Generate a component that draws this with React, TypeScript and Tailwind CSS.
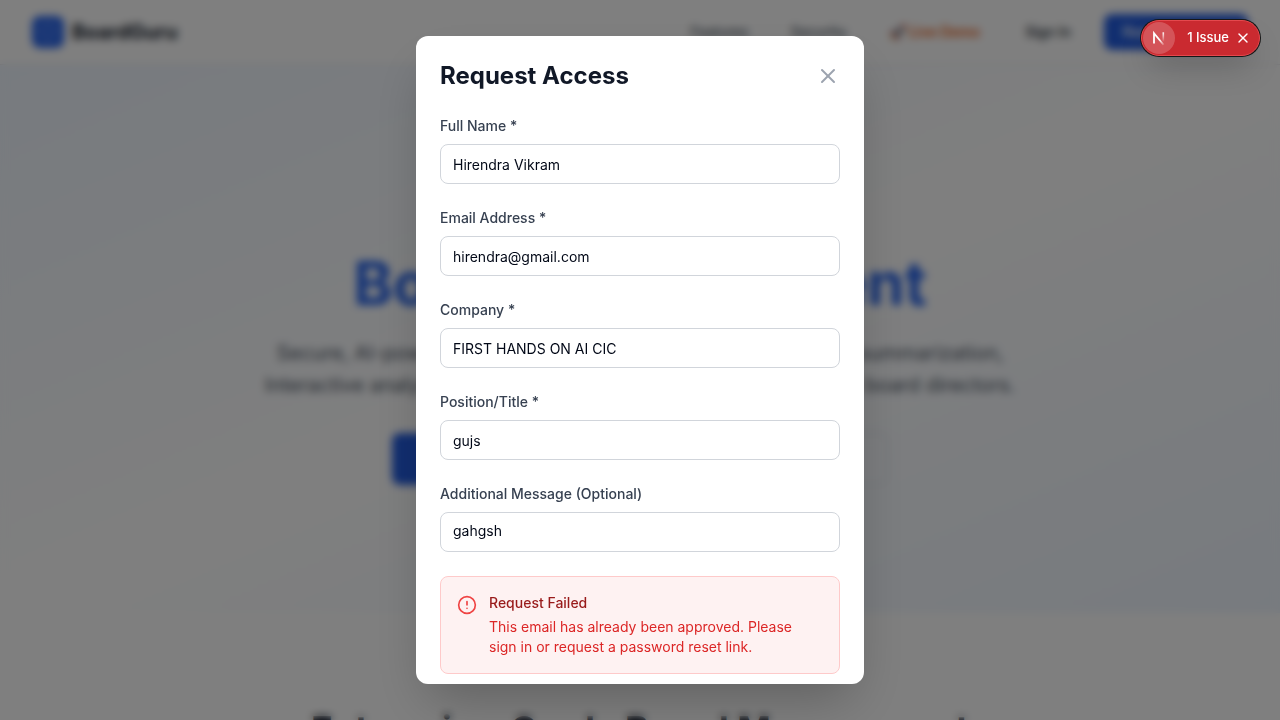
import React from "react";
import { AlertCircle, Shield, X } from "lucide-react";

const fields = [
  { id: "fullName", label: "Full Name *", type: "text", value: "Hirendra Vikram" },
  { id: "email", label: "Email Address *", type: "email", value: "hirendra@gmail.com" },
  { id: "company", label: "Company *", type: "text", value: "FIRST HANDS ON AI CIC" },
  { id: "position", label: "Position/Title *", type: "text", value: "gujs" },
];

const labelClass = "block text-sm font-medium text-[#374151]";
const controlClass =
  "block h-10 w-full rounded-lg border border-[#d1d5db] bg-white px-3 py-2 text-sm text-[#020817] outline-none";

function NavBar() {
  return (
    <header className="border-b border-gray-200 bg-white">
      <nav className="flex h-16 items-center justify-between px-8">
        <a href="#home" className="flex items-center gap-2">
          <span className="flex size-8 items-center justify-center rounded-lg bg-[#2563eb] text-white">
            <Shield className="size-5 opacity-50" />
          </span>
          <span className="text-xl font-bold text-gray-900">BoardGuru</span>
        </a>
        <div className="flex items-center gap-4 text-sm font-medium text-[#4b5563]">
          <div className="flex items-center gap-[42px] pr-3">
            <a href="#features">Features</a>
            <a href="#security">Security</a>
            <a href="#demo" className="font-semibold text-[#ea580c]">🚀 Live Demo</a>
          </div>
          <button type="button" className="h-9 w-20 text-gray-900">Sign In</button>
          <button type="button" className="h-9 w-36 rounded-lg bg-[#225ce0] text-white">
            Request Access
          </button>
        </div>
      </nav>
    </header>
  );
}

function Landing() {
  return (
    <main>
      <section className="flex flex-col items-center bg-linear-to-br from-[#eff6ff] via-white to-[#eff6ff] px-8 py-32 text-center">
        <h1 className="mb-6 text-6xl leading-none font-bold text-gray-900">
          The Future of
          <span className="block text-[#2563eb]">Board Management</span>
        </h1>
        <p className="mb-8 max-w-3xl text-xl leading-8 text-[#4b5563]">
          Secure, AI-powered board platform with intelligent document summarization,
          <br />
          Interactive analytics, and enterprise-grade security for modern board directors.
        </p>
        <div className="flex gap-4">
          <button type="button" className="h-[52px] w-60 rounded-lg bg-[#225ce0] font-medium text-white">
            Request Access
          </button>
          <button type="button" className="h-[52px] w-60 rounded-lg border border-gray-300 font-medium text-gray-900">
            Watch Demo
          </button>
        </div>
      </section>
      <section className="bg-white px-8 py-24 text-center">
        <h2 className="text-4xl font-bold text-gray-900">Enterprise-Grade Board Management</h2>
      </section>
    </main>
  );
}

function RequestAccessDialog() {
  return (
    <div className="fixed inset-0 z-10 flex items-center justify-center bg-black/50 p-4 backdrop-blur-xs">
      <div
        role="dialog"
        aria-modal="true"
        aria-labelledby="dialog-title"
        className="max-h-[90vh] w-full max-w-md overflow-hidden rounded-xl bg-white shadow-2xl"
      >
        <div className="flex items-center justify-between p-6">
          <h2 id="dialog-title" className="text-2xl font-bold text-[#111827]">Request Access</h2>
          <button type="button" aria-label="Close" className="text-[#9ca3af]">
            <X className="size-6" />
          </button>
        </div>
        <form className="flex flex-col gap-6 px-6 pb-6">
          {fields.map((f) => (
            <div key={f.id} className="flex flex-col gap-2">
              <label htmlFor={f.id} className={labelClass}>{f.label}</label>
              <input id={f.id} type={f.type} defaultValue={f.value} className={controlClass} />
            </div>
          ))}
          <div className="flex flex-col gap-2">
            <label htmlFor="message" className={labelClass}>Additional Message (Optional)</label>
            <textarea id="message" rows={1} defaultValue="gahgsh" className={`${controlClass} resize-none`} />
          </div>
          <div role="alert" className="flex gap-3 rounded-lg border border-[#fecaca] bg-[#fef2f2] p-4 text-sm">
            <AlertCircle className="mt-0.5 size-5 shrink-0 text-[#ef4444]" />
            <div>
              <h3 className="font-medium text-[#991b1b]">Request Failed</h3>
              <p className="mt-1 text-[#dc2626]">
                This email has already been approved. Please sign in or request a password reset link.
              </p>
            </div>
          </div>
        </form>
      </div>
    </div>
  );
}

function IssueBadge() {
  return (
    <div className="fixed top-5 right-5 z-20 flex h-9 items-center rounded-full border border-[#e5484d] bg-[#ca2a30] p-px pr-2 text-[13px] font-medium text-white shadow-[0_0_0_1px_#171717,0_16px_32px_-8px_rgba(0,0,0,0.24)]">
      <button type="button" aria-label="Open developer tools" className="flex size-8 items-center justify-center rounded-full bg-white/20">
        <svg viewBox="0 0 32 32" fill="none" className="size-8">
          <defs>
            <linearGradient id="diagonal" x1="18" y1="17" x2="22" y2="23" gradientUnits="userSpaceOnUse">
              <stop stopColor="white" />
              <stop offset="1" stopColor="white" stopOpacity="0.1" />
            </linearGradient>
            <linearGradient id="stem" x1="20" y1="10" x2="20" y2="19" gradientUnits="userSpaceOnUse">
              <stop stopColor="white" />
              <stop offset="1" stopColor="white" stopOpacity="0.1" />
            </linearGradient>
          </defs>
          <path d="M11 21.5V11.2L20.5 22.8" stroke="url(#diagonal)" strokeWidth="1.8" />
          <path d="M20.3 10.3v9" stroke="url(#stem)" strokeWidth="1.6" />
        </svg>
      </button>
      <button type="button" className="pr-1.5 pl-3">1 Issue</button>
      <button type="button" aria-label="Dismiss" className="flex size-4 items-center justify-center">
        <X className="size-4" strokeWidth={2} />
      </button>
    </div>
  );
}

export default function App() {
  return (
    <div className="h-screen overflow-hidden bg-white font-['Inter',sans-serif]">
      <NavBar />
      <Landing />
      <RequestAccessDialog />
      <IssueBadge />
    </div>
  );
}
